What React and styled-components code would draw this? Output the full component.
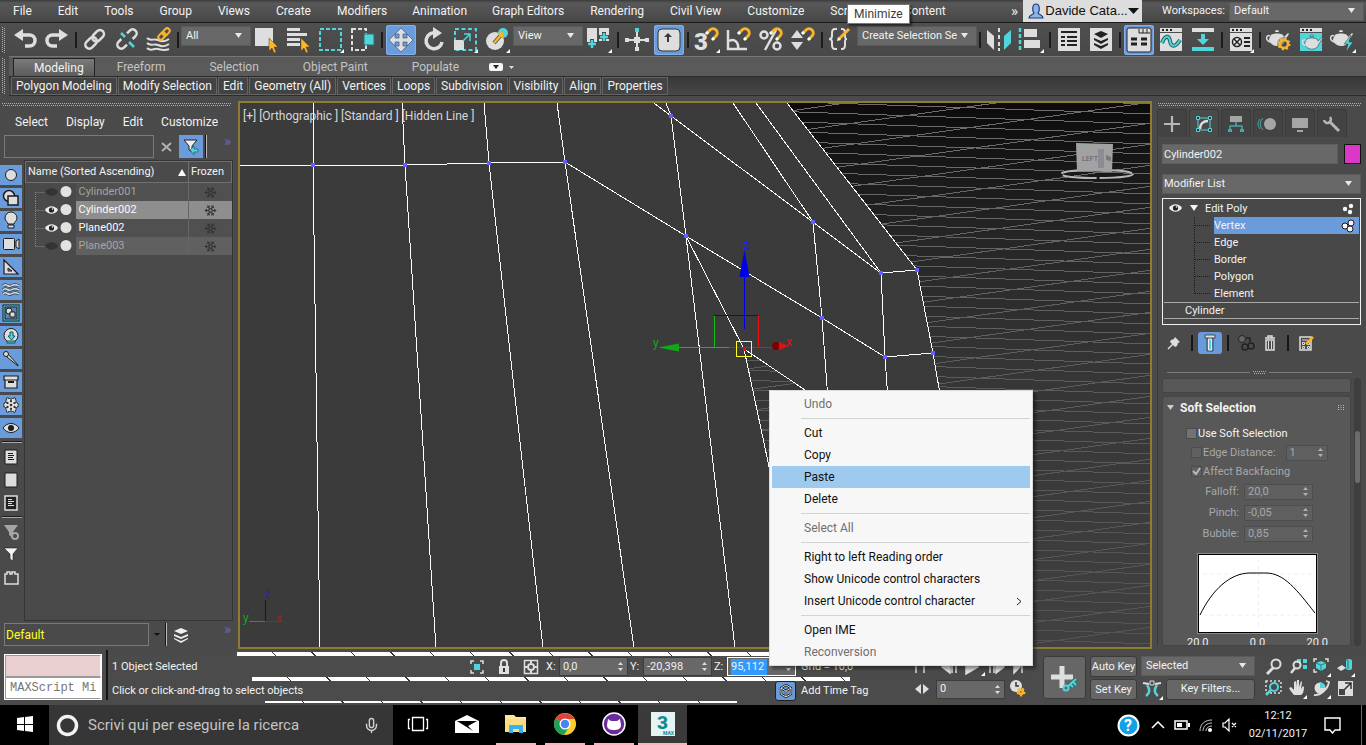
import React from "react";
import styled, { createGlobalStyle, css } from "styled-components";
import { Snowflake, Mic } from "lucide-react";

const c = {
  panel: "#4a4a4a",
  light: "#dedede",
  blue: "#6a9cdb",
  cyan: "#4fd5da",
  orange: "#f8b62c",
  gold: "#8f7b35",
  field: "#686868",
};

const Global = createGlobalStyle`
  * { box-sizing: border-box; }
  html, body { margin: 0; background: ${c.panel}; }
  body, button, input, select {
    font-family: Roboto, "Open Sans", "Noto Sans", sans-serif;
    font-size: 11px;
    line-height: 16px;
    color: #f2f2f2;
  }
  button, input, select { margin: 0; padding: 0; border: 0; background: none; outline: 0; }
  svg { display: block; flex: none; }
`;

const Page = styled.div`
  height: 100vh;
  min-height: 700px;
  display: flex;
  flex-direction: column;
  overflow: hidden;
  background: ${c.panel};
  white-space: nowrap;
`;

/* ---------- shared parts ---------- */

const Glyph = ({ s = 28, w = s, h = s, children, ...rest }) => (
  <svg width={w} height={h} viewBox={`0 0 ${w} ${h}`} fill="none" aria-hidden="true" {...rest}>
    {children}
  </svg>
);

const SelectWrap = styled.span`
  display: grid;
  grid-template-columns: minmax(0, 1fr) 16px;
  align-items: center;
  flex: none;
  width: ${(p) => p.$w || "auto"};
  height: ${(p) => p.$h || 20}px;
  margin: ${(p) => p.$m || "0"};
  background: ${c.field};
  border: 1px solid #5a5a5a;
  > select {
    grid-area: 1 / 1 / 2 / 3;
    appearance: none;
    width: 100%;
    height: 100%;
    padding-left: ${(p) => p.$pad || 4}px;
    padding-right: 14px;
  }
  > svg { grid-area: 1 / 2; pointer-events: none; }
`;

const Caret = () => (
  <Glyph w={10} h={6}><path d="M1 0h7L4.500 5z" fill="#e8e8e8" /></Glyph>
);

const Drop = ({ label, text, ...rest }) => (
  <SelectWrap {...rest}>
    <select aria-label={label} defaultValue={text}><option>{text}</option></select>
    <Caret />
  </SelectWrap>
);

const SpinBox = styled.span`
  display: flex;
  align-items: center;
  width: ${(p) => p.$w || 69}px;
  height: ${(p) => p.$h || 19}px;
  padding: 0 3px;
  background: ${(p) => (p.$dim ? "#5f5f5f" : c.field)};
  border: 1px solid ${(p) => (p.$focus ? "#ffffff" : p.$dim ? "#4d4d4d" : "#3c3c3c")};
  > input {
    flex: 1;
    min-width: 0;
    width: 20px;
    color: ${(p) => (p.$dim ? "#a8a8a8" : "#f0f0f0")};
    ${(p) => p.$focus && css`flex: none; width: 36px; background: #3399ff;`}
  }
  > svg { margin-left: auto; }
`;

const Arrows = ({ color }) => (
  <Glyph w={7} h={11}><path d="M1 4L3.500 1L6 4zM1 7h5L3.500 10z" fill={color} /></Glyph>
);

const Spin = ({ value, label, id, dim, focus, w, h }) => (
  <SpinBox $w={w} $h={h} $dim={dim} $focus={focus}>
    <input id={id} aria-label={label} defaultValue={value} />
    <Arrows color={dim ? "#b0b0b0" : "#dcdcdc"} />
  </SpinBox>
);

const DotLine = styled.div`
  height: 3px;
  margin: ${(p) => p.$m || "0"};
  background-image: repeating-linear-gradient(90deg, #b0b0b0 0 1px, transparent 1px 2px),
    repeating-linear-gradient(90deg, transparent 0 1px, #b0b0b0 1px 2px);
  background-size: 100% 1px;
  background-repeat: no-repeat;
  background-position: 0 0, 0 2px;
`;

const Grip = styled.div`
  align-self: stretch;
  flex: none;
  width: 4px;
  margin: ${(p) => p.$m};
  background-image: repeating-linear-gradient(180deg, #b0b0b0 0 1px, transparent 1px 2px),
    repeating-linear-gradient(180deg, transparent 0 1px, #b0b0b0 1px 2px);
  background-size: 1px 100%;
  background-position: 0 0, 2px 0;
  background-repeat: no-repeat;
`;

const Chevrons = styled.span`
  align-self: center;
  font-size: 15px;
  line-height: 16px;
  color: ${(p) => p.$color || "#6767b8"};
`;

const VLine = styled.i`
  flex: none;
  width: 2px;
  height: ${(p) => p.$h || 16}px;
  background: #161616;
  border-right: ${(p) => (p.$lit ? "1px solid #b8b8b8" : "0")};
`;

/* ---------- menu bar ---------- */

const MenuBar = styled.header`
  position: relative;
  display: flex;
  flex: none;
  height: 23px;
  background: linear-gradient(#3c3c3c, #585858 3px, #474747);
  border-bottom: 1px solid #1c1c1c;
`;
const Menus = styled.nav`
  display: flex;
  align-items: center;
  flex: 1;
  min-width: 0;
  overflow: hidden;
`;
const MenuItem = styled.button`
  flex: none;
  padding: 0 13px;
  height: 22px;
  font-size: 12px;
  ${(p) => p.$tight && css`padding: 0 12px;`}
`;
const User = styled.button`
  display: flex;
  align-items: center;
  justify-content: space-between;
  width: 119px;
  height: 22px;
  margin: 0 20px 0 5px;
  padding: 0 3px 0 4px;
  background: #dddddd;
  color: #111;
  font-family: "Liberation Sans", sans-serif;
  font-size: 13px;
`;
const Workspaces = styled.label`
  display: flex;
  align-items: center;
  gap: 4px;
  padding-right: 2px;
`;
const Tip = styled.div`
  position: absolute;
  left: 847px;
  top: 4px;
  height: 20px;
  padding: 1px 6px;
  background: #fff;
  border: 1px solid #777;
  box-shadow: 2px 2px 2px rgba(0, 0, 0, 0.5);
  color: #3c3c3c;
  font-size: 12px;
  z-index: 2;
`;

/* ---------- toolbar ---------- */

const Toolbar = styled.div`
  display: flex;
  flex: none;
  align-items: center;
  height: 33px;
  background: linear-gradient(#4f4f4f, #484848);
`;
const Tool = styled.button`
  display: grid;
  place-items: center;
  width: 30px;
  height: 30px;
  margin: 0 1px;
  flex: none;
  border-radius: 3px;
  ${(p) => p.$on && css`background: ${c.blue}; box-shadow: inset 0 0 0 1px #83b0e8;`}
`;
const ToolSep = styled.i`
  flex: none;
  width: 2px;
  height: 16px;
  margin: 0 2px;
  background: #1b1b1b;
`;

const L = c.light;
const Corner = () => <path d="M27 23v4h-4z" fill="#fff" />;
const Magnet = () => (
  <g>
    <path d="M14 7l3-3a4 4 0 0 1 6 6l-3 3" stroke={c.orange} strokeWidth="3" />
    <path d="M13 8l2-2M19 14l2-2" stroke="#fff" strokeWidth="3" />
  </g>
);
const Teapot = ({ y = 0, fill = L }) => (
  <g transform={`translate(0 ${y})`} fill={fill}>
    <path d="M6 7c2-2 10-2 12 0l1 2 4-4 1 1-4 6c-1 4-4 6-8 6s-8-3-8-7z" />
    <path d="M10 4a2 2 0 0 1 4 0z" />
    <path d="M5 8c-4-2-5 4 0 6" fill="none" stroke={fill} strokeWidth="1.500" />
  </g>
);
const Gear = ({ cx, cy, r = 4 }) => (
  <g>
    <circle cx={cx} cy={cy} r={r} stroke={c.orange} strokeWidth="2.500" />
    <circle cx={cx} cy={cy} r={r + 1.5} stroke={c.orange} strokeWidth="2" strokeDasharray="2 2.300" />
  </g>
);
const Cursor = () => <path d="M16 12v13l3-3 2 5 2-1-2-5h4z" fill={c.orange} stroke="#5a4510" strokeWidth="0.500" />;

const icons = {
  undo: <><path d="M10 9h8.500a5.500 5.500 0 0 1 0 11H14" stroke={L} strokeWidth="3.500" /><path d="M3 9l9-6v12z" fill={L} /></>,
  redo: <><path d="M18 9H9.500a5.500 5.500 0 0 0 0 11H14" stroke={L} strokeWidth="3.500" /><path d="M25 9l-9-6v12z" fill={L} /></>,
  link: <g transform="rotate(-45 14 13)" stroke={L} strokeWidth="2.500"><rect x="2" y="9" width="13" height="8" rx="4" /><rect x="12" y="9" width="13" height="8" rx="4" /></g>,
  unlink: <><g transform="rotate(-45 14 13)" stroke={L} strokeWidth="2.500"><path d="M10 9H6a4 4 0 0 0 0 8h4M18 9h4a4 4 0 0 1 0 8h-4" /></g><path d="M8 7l4 4M16 16l5 5" stroke={c.cyan} strokeWidth="2.500" /></>,
  bind: <><path d="M2 12c4 4 7 0 11 2s7 2 11-1M2 17c4 4 7 0 11 2s7 2 11-1M2 22c4 4 7 0 11 1s7 2 11 0" stroke={L} strokeWidth="2" /><g transform="rotate(-45 19 8)" stroke={c.orange} strokeWidth="2"><rect x="12" y="5.500" width="8" height="5" rx="2.500" /><rect x="18" y="5.500" width="8" height="5" rx="2.500" /></g></>,
  pick: <><path d="M2 2h18v18H2z" fill={L} /><Cursor /></>,
  byName: <><path d="M2 2h13v3H2zM2 7h20v3H2zM2 12h13v3H2zM2 17h13v3H2z" fill={L} /><Cursor /></>,
  region: <><rect x="3" y="3" width="21" height="21" stroke={c.cyan} strokeWidth="2" strokeDasharray="4 2" /><Corner /></>,
  window: <><rect x="3" y="3" width="14" height="21" stroke={L} strokeWidth="2" strokeDasharray="4 2" /><path d="M15 8h10v11H15z" fill={c.cyan} stroke="#2c6d70" /></>,
  move: <path d="M14 2l6 6h-4v4h4V8l6 6-6 6v-4h-4v4h4l-6 6-6-6h4v-4H8v4l-6-6 6-6v4h4V8H8z" fill={L} stroke="#4a5f7d" strokeWidth="0.800" />,
  rotate: <><path d="M17 7a8 8 0 1 0 6 9" stroke={L} strokeWidth="3.500" /><path d="M14 1l9 6-9 6z" fill={L} /></>,
  scale: <><rect x="4" y="3" width="21" height="21" stroke={c.cyan} strokeWidth="2" strokeDasharray="4 2.500" /><path d="M3 14h10v10H3z" fill={L} /><path d="M13 8h6v7M19 8l-7 7" stroke={c.cyan} strokeWidth="1.500" /><Corner /></>,
  place: <><circle cx="12" cy="15" r="9" fill={L} /><circle cx="20" cy="7" r="5" fill={c.cyan} /><path d="M11 17l7-8" stroke="#4a4a4a" strokeWidth="4" /><path d="M11 17l7-8" stroke={c.orange} strokeWidth="2.500" /><path d="M20 6v7l-6-6z" fill={c.orange} /><Corner /></>,
  pivot: <><path d="M2 2h10v18H2zM14 2h10v13H14z" fill={L} /><path d="M7 13v10M2 18h10M19 6v10M14 11h10" stroke="#3c4a4a" strokeWidth="4" /><path d="M7 14v8M3 18h8M19 7v8M15 11h8" stroke={c.cyan} strokeWidth="2.500" /><Corner /></>,
  manip: <><path d="M14 5v19M3 14h22" stroke={L} strokeWidth="2" /><path d="M12 2h4v4h-4z" fill={c.cyan} /><path d="M2 12h4v4H2zM22 12h4v4h-4zM12 21h4v4h-4zM11 11h6v6h-6z" fill={L} /></>,
  keys: <><rect x="3" y="3" width="22" height="22" rx="4" fill={L} stroke="#333" /><path d="M12 16v-5H9l4-4 4 4h-3v5z" fill="#3a3a3a" /></>,
  snap3: <><text x="1" y="24" fontSize="24" fontWeight="900" fill={L} fontFamily="Roboto">3</text><Magnet /><Corner /></>,
  angle: <><path d="M3 4v19h19" stroke={L} strokeWidth="2.500" /><path d="M4 15c6-3 10 2 9 8" stroke={L} strokeWidth="2.500" /><Magnet /></>,
  percent: <><circle cx="7" cy="9" r="3.500" stroke={L} strokeWidth="2.500" /><circle cx="20" cy="20" r="3.500" stroke={L} strokeWidth="2.500" /><path d="M19 4L8 24" stroke={L} strokeWidth="2.500" /><Magnet /></>,
  spinner: <><path d="M8 4l6 8H2zM8 24l6-8H2z" fill={L} /><Magnet /></>,
  named: <><path d="M10 3H8c-2 0-3 1-3 4v3c0 2-1 3-3 3 2 0 3 1 3 3v3c0 3 1 4 3 4h2M14 3h1c2 0 3 1 3 4v3c0 2 0 3 2 3-2 0-2 1-2 3v3c0 3-1 4-3 4h-1" stroke={L} strokeWidth="2" /><path d="M12 13L22 3" stroke={c.orange} strokeWidth="3" /><path d="M10 15l1-4 3 3z" fill="#fff" /></>,
  mirror: <><path d="M2 4l7 6v14l-7-7zM13 2h2v4h-2zM13 9h2v4h-2zM13 16h2v4h-2zM13 22h2v3h-2z" fill={L} /><path d="M26 4l-7 6v14l7-7z" fill={c.cyan} /></>,
  align: <><path d="M3 2v23" stroke={c.cyan} strokeWidth="2.500" strokeDasharray="4 2" /><path d="M7 3h13v8H7zM7 14h16v8H7z" fill={L} /><Corner /></>,
  explorer: <><path d="M3 2h22v23H3z" fill={L} /><path d="M6 6h16M6 11h4M6 15h4M6 19h4M12 11h10M12 15h10M12 19h10" stroke="#222" strokeWidth="2" /></>,
  layers: <><path d="M3 2h22v23H3z" fill={L} /><path d="M14 5l7 3-7 4-7-4zM7 12l7 3 7-3v2l-7 4-7-4zM7 17l7 3 7-3v2l-7 4-7-4z" fill="#222" /></>,
  ribbon: <><rect x="2" y="2" width="24" height="24" rx="2" fill={L} stroke="#222" /><path d="M14 3v4h11M18 3v4M22 3v4" stroke="#222" /><path d="M6 13h6M6 18h6M16 13h6M16 18h6" stroke="#222" strokeWidth="3" /><path d="M6 15.500h16" stroke={L} /></>,
  curve: <><path d="M3 2h22v4H3zM3 7h22v18H3z" fill={L} /><path d="M5 4h2M9 4h2M13 4h2" stroke="#222" strokeWidth="2" /><path d="M5 17c3-8 7-8 8-2s5 7 10-1" stroke="#1d5f66" strokeWidth="4" /><path d="M5 17c3-8 7-8 8-2s5 7 10-1" stroke={c.cyan} strokeWidth="2" /></>,
  schematic: <><path d="M3 2h22v4H3z" fill={L} /><path d="M3 21h22v4H3z" fill={c.cyan} /><path d="M12 8h4v5h4l-6 6-6-6h4z" fill={c.cyan} /></>,
  material: <><path d="M3 2h22v4H3zM3 7h22v18H3z" fill={L} /><path d="M5 4h2M9 4h2M13 4h2" stroke="#222" strokeWidth="2" /><circle cx="10" cy="16" r="4.500" fill="#eee" stroke="#222" strokeWidth="1.500" /><path d="M7 13l6 6M13 13l-6 6" stroke="#222" strokeWidth="1.500" /><path d="M17 12h6M17 16h6M17 20h6" stroke="#222" strokeWidth="2" /><Corner /></>,
  renderSet: <><Teapot y={2} /><circle cx="19" cy="18" r="7" fill="#4a4a4a" opacity="0.500" /><Gear cx={19} cy={18} /></>,
  renderFrame: <><path d="M3 2h22v4H3z" fill={L} /><path d="M3 7h22v18H3z" fill={c.cyan} /><path d="M5 4h2M9 4h2M13 4h2" stroke="#222" strokeWidth="2" /><g transform="translate(4 7) scale(.9)" stroke="#2b5f61" strokeWidth="0.800"><Teapot /></g></>,
  render: <><Teapot y={2} /><path d="M22 9l-7 9h4l-2 8 7-10h-4z" fill={c.cyan} stroke="#3a3a3a" strokeWidth="0.500" /><Corner /></>,
};

const tool = (name, label, on) => ({ name, label, on });
const toolGroups = [
  [tool("undo", "Undo"), tool("redo", "Redo")],
  [tool("link", "Link"), tool("unlink", "Unlink"), tool("bind", "Bind to Space Warp")],
  ["All", tool("pick", "Select Object"), tool("byName", "Select by Name"), tool("region", "Selection Region"), tool("window", "Window Crossing")],
  [tool("move", "Move", true), tool("rotate", "Rotate"), tool("scale", "Scale"), tool("place", "Place"), "View", tool("pivot", "Pivot Center")],
  [tool("manip", "Manipulate"), tool("keys", "Keyboard Override", true)],
  [tool("snap3", "Snaps"), tool("angle", "Angle Snap"), tool("percent", "Percent Snap"), tool("spinner", "Spinner Snap")],
  [tool("named", "Named Sets"), "Create Selection Se"],
  [tool("mirror", "Mirror"), tool("align", "Align")],
  [tool("explorer", "Scene Explorer"), tool("layers", "Layer Explorer")],
  [tool("ribbon", "Toggle Ribbon", true), tool("curve", "Curve Editor"), tool("schematic", "Schematic View")],
  [tool("material", "Material Editor")],
  [tool("renderSet", "Render Setup"), tool("renderFrame", "Rendered Frame"), tool("render", "Render")],
];

/* ---------- ribbon ---------- */

const RibbonRow = styled.div`
  display: flex;
  flex: none;
  height: 45px;
`;
const Ribbon = styled.div`
  flex: 1;
  min-width: 0;
  margin-bottom: 5px;
  border-top: 1px solid #767676;
`;
const Tabs = styled.div`
  display: flex;
  align-items: flex-end;
  height: 20px;
  padding-left: 4px;
  background: #5a5a5a;
  border-bottom: 1px solid #2c2c2c;
`;
const Tab = styled.button`
  height: 18px;
  padding: 0 22px;
  font-size: 12px;
  color: #c4c4c4;
  ${(p) => p.$on && css`
    padding: 0 10px 0 20px;
    color: #f4f4f4;
    background: linear-gradient(#7a7a7a, #5c5c5c);
    border: 1px solid #222;
    border-bottom: 0;
  `}
`;
const TabTools = styled.div`
  display: flex;
  align-items: center;
  gap: 5px;
  height: 18px;
  padding-left: 8px;
`;
const Panels = styled.div`
  display: flex;
  gap: 1px;
  height: 19px;
  padding-left: 2px;
  background: linear-gradient(#383838, #484848);
  border-bottom: 1px solid #2c2c2c;
`;
const PanelButton = styled.button`
  height: 18px;
  padding: 0 4px;
  font-size: 12px;
  border: 1px solid #646464;
  background: #434343;
`;

/* ---------- left explorer ---------- */

const Main = styled.main`
  display: flex;
  flex: 1;
  min-height: 0;
`;
const Left = styled.aside`
  display: flex;
  flex-direction: column;
  flex: none;
  width: 238px;
  padding: 2px 1px 2px 0;
`;
const SideMenus = styled.nav`
  display: flex;
  padding: 6px 0 1px 7px;
  > button { height: 20px; padding: 0 9px 0 8px; font-size: 12px; }
  > button + button { padding: 0 9px; }
`;
const SearchRow = styled.div`
  display: flex;
  align-items: center;
  height: 27px;
  padding: 0 6px 0 4px;
  > input {
    width: 150px;
    height: 23px;
    border: 1px solid #7a7a7a;
    padding: 0 4px;
    ${(p) => p.$layer && css`color: #ffff20; width: 145px; padding: 0 1px; font-size: 12px;`}
  }
  > :last-child { margin-left: auto; align-self: flex-start; }
`;
const ClearButton = styled.button`
  display: grid;
  place-items: center;
  width: ${(p) => p.$w || 25}px;
`;
const FilterButton = styled.button`
  display: grid;
  place-items: center;
  width: 24px;
  height: 23px;
  margin-right: 2px;
  background: ${c.blue};
`;
const Explorer = styled.div`
  display: flex;
  flex: 1;
  min-height: 0;
  margin: 0 4px 0 0;
`;
const Strip = styled.div`
  display: flex;
  flex-direction: column;
  gap: 3px;
  width: 24px;
  padding-top: 5px;
`;
const StripButton = styled.button`
  display: grid;
  place-items: center;
  width: 22px;
  height: 20px;
  flex: none;
  ${(p) => p.$on && css`background: ${c.blue};`}
`;
const StripRule = styled.i`
  height: 2px;
  margin: 0 2px 1px;
  border-top: 1px solid #1d1d1d;
  border-bottom: 1px solid #a8a8a8;
  flex: none;
`;
const TreeBox = styled.div`
  flex: 1;
  border: 1px solid #353535;
`;
const Tree = styled.table`
  width: 100%;
  border-collapse: collapse;
  table-layout: fixed;
  th {
    height: 21px;
    padding: 0 2px;
    text-align: left;
    font-weight: 400;
    border: 1px solid #707070;
  }
  th > span { display: flex; align-items: center; justify-content: space-between; }
  td { height: 18px; padding: 0; }
`;
const NameCell = styled.td`
  && { padding-left: 3px; }
  color: ${(p) => (p.$hidden ? "#a4a4a4" : "#fafafa")};
  background: ${(p) => p.$bg};
  border-right: 1px solid #666;
`;
const FrozenCell = styled.td`
  background: ${(p) => p.$bg};
  > svg { margin: 0 auto; }
`;

const INK = "#1c1c1c";
const WAVES = "M3 6c3-4 5 2 8 0s5-2 8 0M3 10c3-4 5 2 8 0s5-2 8 0M3 14c3-4 5 2 8 0s5-2 8 0";
const stripIcons = [
  ["Geometry", true, <circle cx="11" cy="10" r="5.500" fill={L} stroke={INK} />],
  ["Shapes", true, <><circle cx="9" cy="8" r="5.500" fill={L} stroke={INK} strokeWidth="1.500" /><path d="M8 8h10v9H8z" fill={L} stroke={INK} strokeWidth="1.500" /></>],
  ["Lights", true, <><path d="M8 13c0-2-3-3-3-6a6 6 0 0 1 12 0c0 3-3 4-3 6z" fill={L} stroke={INK} /><path d="M8 14h6v3H8z" fill={L} stroke={INK} /></>],
  ["Cameras", true, <><rect x="3.500" y="4.500" width="11" height="11" rx="1" fill={L} stroke={INK} /><path d="M16 7l3-2v10l-3-2z" fill={L} stroke={INK} /></>],
  ["Helpers", true, <><path d="M4 3v14h14z" fill={L} stroke={INK} strokeWidth="1.200" /><path d="M8 11v3h4z" fill={c.blue} stroke={INK} /></>],
  ["Space Warps", true, <><path d={WAVES} stroke="#2b3a4d" strokeWidth="3" /><path d={WAVES} stroke={L} strokeWidth="1.500" /></>],
  ["Groups", true, <><rect x="4" y="3" width="14" height="14" fill="#5a85ba" stroke={INK} strokeWidth="3" /><rect x="4" y="3" width="14" height="14" stroke={c.cyan} /><circle cx="9" cy="8" r="3" fill={L} stroke={INK} /><path d="M10 9h5v5h-5z" fill={L} stroke={INK} /></>],
  ["XRefs", true, <><circle cx="11" cy="9.500" r="7" fill={L} stroke={INK} /><path d="M10 6h3v4h2l-3.500 4L8 10h2z" fill={c.cyan} stroke="#14575a" /><path d="M7 15h8v2H7z" fill={c.cyan} stroke="#14575a" /></>],
  ["Bones", true, <><path d="M8 5l10 11v1L7 8z" fill={L} stroke={INK} /><circle cx="6" cy="5" r="2.500" fill={L} stroke={INK} /></>],
  ["Containers", true, <><path d="M4 4h14v4H4zM5 8h12v8H5z" fill={L} stroke={INK} strokeWidth="1.200" /><path d="M8 10h6" stroke={INK} strokeWidth="2" /></>],
  ["Frozen", true, <><Snowflake x="3" y="2" width="16" height="16" color="#333" strokeWidth="5" /><Snowflake x="3" y="2" width="16" height="16" color="#e8e8e8" strokeWidth="2.500" /></>],
  ["Hidden", true, <><path d="M3 10c4-6 12-6 16 0-4 6-12 6-16 0z" fill={L} stroke={INK} /><circle cx="11" cy="10" r="3" fill={INK} /></>],
  null,
  ["All", false, <><path d="M5 3h12v14H5z" fill={L} stroke={INK} /><path d="M8 6.500h5M8 8.500h6M8 10.500h5M8 12.500h6" stroke={INK} /></>],
  ["None", false, <path d="M5 3h12v14H5z" fill={L} stroke={INK} />],
  ["Invert", false, <><path d="M5 3h12v14H5z" fill="#222" stroke={L} strokeWidth="1.500" /><path d="M8 6.500h4M8 8.500h6M8 10.500h4M8 12.500h6" stroke={L} /></>],
  null,
  ["Filter Settings", false, <><path d="M4 3h14l-5 7v6l-4-3v-3z" fill="#a5a5a5" /><circle cx="15" cy="14" r="3" fill="#4a4a4a" stroke="#a5a5a5" strokeWidth="2" /></>],
  ["Filter", false, <path d="M4 3h14l-5 6v7l-3-2V9z" fill="#f4f4f4" stroke={INK} strokeWidth="0.600" />],
  ["Extensions", false, <path d="M5 6h2V4h3v2h2V4h3v2h3v10H5z" stroke={L} strokeWidth="1.500" />],
];

const Eye = ({ x = 0, y = 0, off }) => (
  <g transform={`translate(${x} ${y})`}>
    <path d="M0 5c3-5 10-5 13 0-3 5-10 5-13 0z" fill={off ? "#343434" : "#ececec"} />
    {!off && <circle cx="6.500" cy="5" r="2.600" fill="#222" />}
    {!off && <circle cx="7.500" cy="4" r="0.800" fill="#fff" />}
  </g>
);

const rows = [
  { name: "Cylinder001", hidden: true, bg: "#505050", first: true },
  { name: "Cylinder002", bg: "#8e8e8e" },
  { name: "Plane002", bg: "#505050" },
  { name: "Plane003", hidden: true, bg: "#606060", last: true },
];

/* ---------- viewport ---------- */

const Viewport = styled.section`
  position: relative;
  display: flex;
  flex: 1;
  min-width: 0;
  margin-bottom: 1px;
  border: 2px solid ${c.gold};
  > svg { flex: 1; width: 100%; height: 100%; min-width: 0; }
`;
const ViewLabel = styled.div`
  position: absolute;
  left: 3px;
  top: 5px;
  color: #d8d8d8;
  font-size: 12px;
`;

const falling = Array.from({ length: 62 }, (_, i) => `M740 ${60 + i * 10}L1152 ${74 + i * 10}`).join("");
const rising = Array.from({ length: 32 }, (_, i) => `M740 ${118 + i * 21}L1152 ${60 + i * 21}`).join("");

const meshPath =
  "M239 165H313L405 165L489 163L565 162L686 236L822 318L885 357L933 353" +
  "M313 103V165L320 648M402 103L405 165L436 648M484 103L489 163L543 648M557 103L565 162L634 648" +
  "M654 103L671 116L813 222L881 273L917 270M666 103L671 116L686 236L735 648" +
  "M733 103L813 222L822 318L828 400M756 103L881 273L885 357L888 400M787 103L917 270L933 353L941 400" +
  "M686 236L744 349L774 490M744 349L820 400";
const points = [[313, 165], [405, 165], [489, 163], [565, 162], [686, 236], [671, 116], [813, 222], [881, 273], [917, 270], [822, 318], [885, 357], [933, 353]];

const Scene = () => (
  <svg viewBox="240 103 910 544" preserveAspectRatio="xMidYMid slice" fill="none" role="img" aria-label="Orthographic view">
    <defs>
      <linearGradient id="depth" x1="0" y1="0" x2="0" y2="1">
        <stop offset="0" stopColor="#0b0b0b" />
        <stop offset="0.250" stopColor="#262626" />
        <stop offset="0.500" stopColor="#363636" />
        <stop offset="1" stopColor="#414141" />
      </linearGradient>
      <linearGradient id="lines" x1="0" y1="103" x2="0" y2="648" gradientUnits="userSpaceOnUse">
        <stop offset="0" stopColor="#6e6e6e" />
        <stop offset="0.500" stopColor="#5c5c5c" />
        <stop offset="1" stopColor="#545454" />
      </linearGradient>
      <clipPath id="open"><path d="M787 103L917 270L933 353L990 648H1152V103zM744 349L820 400L790 560z" /></clipPath>
    </defs>
    <path d="M239 103h913v546H239z" fill="#3b3b3b" />
    <g clipPath="url(#open)" shapeRendering="crispEdges">
      <path d="M740 103h412v546H740z" fill="url(#depth)" />
      <path d={falling + rising} stroke="url(#lines)" />
    </g>
    <path d={meshPath} stroke="#fff" shapeRendering="crispEdges" />
    {points.map(([x, y]) => <rect key={`${x}-${y}`} x={x - 2} y={y - 2} width="4" height="4" fill="#6060ff" />)}
    <path d="M744 277h1v52h-1zM714 315h44v1h-44z" fill="#0000e6" />
    <path d="M714 316h1v32h-1zM678 347h51v1h-51z" fill="#10c010" />
    <path d="M758 316h1v32h-1zM729 347h46v1h-46z" fill="#e81010" />
    <path d="M744.500 250l5 27h-10z" fill="#0000e6" />
    <path d="M658 347.500l21-4v8z" fill="#10a818" />
    <circle cx="776" cy="346" r="4" fill="#7c0000" />
    <path d="M779 342l10 4-10 4z" fill="#e01010" />
    <rect x="736.500" y="341.500" width="15" height="15" stroke="#ffff20" />
    <path d="M743 347h3v4h-3z" fill="#e01010" />
    <g fontSize="12" fontFamily="Roboto">
      <text x="743" y="249" fill="#2020e0">z</text>
      <text x="653" y="347" fill="#10a818">y</text>
      <text x="786" y="346" fill="#e01010">x</text>
      <text x="264" y="598" fill="#2020e0">z</text>
      <text x="243" y="622" fill="#10a818">y</text>
      <text x="276" y="622" fill="#a02020">x</text>
    </g>
    <path d="M265 600h1v21h-1z" fill="#0000e6" />
    <path d="M249 621h16v1h-16z" fill="#10a818" />
    <path d="M265 621h16v1h-16z" fill="#a02020" />
    <ellipse cx="1097" cy="174" rx="36" ry="4" stroke="#b4b7bb" strokeWidth="2" strokeDasharray="34 3" />
    <path d="M1076 143l37 1-1 28-35-1z" fill="#a2a2a2" />
    <path d="M1098 149h6v19h-6z" fill="#8b8d93" />
    <path d="M1106 155l5 2v4l-5-1z" fill="#777a80" />
    <text x="1082" y="161" fontSize="7" fill="#5a5d63" fontFamily="Roboto">LEFT</text>
  </svg>
);

/* ---------- command panel ---------- */

const Right = styled.aside`
  display: flex;
  flex-direction: column;
  flex: none;
  width: 214px;
  min-height: 0;
  padding: 2px 5px 4px 5px;
`;
const CommandTabs = styled.div`
  display: flex;
  gap: 2px;
  margin-top: 3px;
  > button {
    display: grid;
    place-items: center;
    width: 30px;
    height: 28px;
    background: #434343;
    border: 1px solid #3a3a3a;
    border-bottom: 0;
    border-radius: 3px 3px 0 0;
  }
  > button:nth-child(2) { background: ${c.panel}; }
`;
const Body = styled.div`
  display: flex;
  flex-direction: column;
  flex: 1;
  min-height: 0;
  padding: 7px 0 0 4px;
  border-left: 1px solid #3a3a3a;
`;
const NameRow = styled.div`
  display: flex;
  gap: 6px;
  margin-bottom: 10px;
  > input {
    flex: 1;
    min-width: 0;
    height: 20px;
    padding: 0 1px;
    background: ${c.field};
    border: 1px solid #5e5e5e;
  }
  > button { width: 17px; height: 20px; background: #dc38c8; border: 1px solid #111; }
`;
const Stack = styled.ul`
  display: flex;
  flex-direction: column;
  flex: none;
  height: 127px;
  margin: 4px 0 6px;
  padding: 1px;
  list-style: none;
  border: 1px solid #f0f0f0;
  background: #484848;
`;
const StackRow = styled.li`
  display: flex;
  align-items: center;
  height: 17px;
  flex: none;
  > b { flex: 1; font-weight: 400; display: flex; align-items: center; height: 17px; }
  ${(p) => p.$on && css`> b { background: ${c.blue}; }`}
  ${(p) => p.$base && css`
    padding-left: 21px;
    border-top: 1px solid #a8a8a8;
    border-bottom: 1px solid #a8a8a8;
  `}
`;
const DotsCell = styled.span`
  display: flex;
  align-items: center;
  height: 17px;
  padding-right: 3px;
  background: ${(p) => (p.$on ? c.blue : "none")};
`;
const StackTools = styled.div`
  display: flex;
  flex: none;
  align-items: center;
  height: 24px;
  > button { display: grid; place-items: center; width: 24px; height: 22px; border-radius: 3px; }
  > button[aria-pressed="true"] { background: ${c.blue}; }
  > i { margin: 0 5px; }
`;
const Splitter = styled.div`
  display: flex;
  flex: none;
  align-items: center;
  gap: 3px;
  height: 8px;
  margin: 13px 9px 2px 5px;
  &::before, &::after { content: ""; flex: 1; height: 1px; background: #7c7c7c; }
  > i { width: 13px; }
`;
const Rollouts = styled.div`
  display: flex;
  flex: 1;
  min-height: 0;
  gap: 3px;
  overflow: hidden;
`;
const RolloutList = styled.div`
  display: flex;
  flex-direction: column;
  gap: 3px;
  flex: 1;
  min-width: 0;
`;
const Rollout = styled.section`
  background: #585858;
  border: 1px solid #454545;
  border-radius: 2px;
  ${(p) => p.$tail ? css`height: 15px;` : css`flex: 1; min-height: 0; overflow: hidden;`}
`;
const RolloutHead = styled.h2`
  display: flex;
  align-items: center;
  gap: 5px;
  height: 22px;
  margin: 0 6px 5px 4px;
  font-size: 12px;
  > svg:last-child { margin-left: auto; }
`;
const CheckRow = styled.div`
  display: flex;
  align-items: center;
  gap: 10px;
  height: 19px;
  margin-left: ${(p) => (p.$sub ? 28 : 23)}px;
`;
const CheckLabel = styled.label`
  display: flex;
  align-items: center;
  gap: 1px;
  color: ${(p) => (p.$sub ? "#a8a8a8" : "#f5f5f5")};
`;
const Box = styled.span`
  display: grid;
  place-items: center;
  > * { grid-area: 1 / 1; }
  > input {
    appearance: none;
    width: 11px;
    height: 11px;
    background: ${(p) => (p.$sub ? "#606060" : "#727272")};
    border: 1px solid #4c4c4c;
  }
  > svg { visibility: hidden; pointer-events: none; }
  > input:checked + svg { visibility: visible; }
`;
const Check = ({ label, sub, checked, children }) => (
  <CheckRow $sub={sub}>
    <CheckLabel $sub={sub}>
      <Box $sub={sub}>
        <input type="checkbox" defaultChecked={checked} />
        <Glyph w={9} h={9}><path d="M1 4l3 3 4-6" stroke="#bdbdbd" strokeWidth="1.800" /></Glyph>
      </Box>
      {label}
    </CheckLabel>
    {children}
  </CheckRow>
);
const ParamRow = styled.div`
  display: grid;
  grid-template-columns: 76px 69px;
  gap: 5px;
  align-items: center;
  height: 21px;
  color: #a8a8a8;
  > label { text-align: right; }
`;
const Falloff = styled.div`
  width: 121px;
  margin: 9px 0 0 34px;
  border: 1px solid #8a8a8a;
`;
const Axis = styled.div`
  display: flex;
  justify-content: space-between;
  width: 141px;
  margin: 1px 0 0 24px;
`;
const Scroll = styled.div`
  width: 7px;
  border-radius: 3px;
  background: #3e3e3e;
  &::after {
    content: "";
    display: block;
    width: 5px;
    height: 52px;
    margin: 53px auto 0;
    border-radius: 3px;
    background: #6c6c6c;
  }
`;

const commandIcons = [
  ["Create", <path d="M11 3v16M3 11h16" stroke="#b8b8b8" strokeWidth="2.200" />],
  ["Modify", <><rect x="5" y="5" width="12" height="12" stroke="#4fd5da" /><path d="M7 16c0-5 3-8 8-8" stroke={L} strokeWidth="2.500" /><path d="M3.500 3.500h3v3h-3zM15.500 3.500h3v3h-3zM3.500 15.500h3v3h-3zM15.500 15.500h3v3h-3z" fill="#333" stroke="#4fd5da" /></>],
  ["Hierarchy", <><path d="M5 3h12v6H5z" fill="#a5a5a5" /><path d="M11 9v4M5 17v-4h12v4" stroke="#4aa5a9" strokeWidth="1.500" /><path d="M3 16h4v3H3zM15 16h4v3h-4z" fill="#4aa5a9" /></>],
  ["Motion", <><circle cx="13" cy="11" r="6" fill="#a5a5a5" /><path d="M6 5a8 8 0 0 0 0 12M3 6a8 8 0 0 0 0 10" stroke="#4aa5a9" /></>],
  ["Display", <path d="M3 5h16v10H3zM8 17h6v2H8z" fill="#a5a5a5" />],
  ["Utilities", <><path d="M8 8l10 10" stroke="#b5b5b5" strokeWidth="3" /><path d="M9 4a3.500 3.500 0 1 1-6 3" stroke="#b5b5b5" strokeWidth="2.500" /></>],
];

const Dots = ({ on }) => (
  <DotsCell $on={on}>
    <Glyph w={15} h={14}>
      <g fill="#f5f5f5" stroke={on ? "#1c1c1c" : "none"}>
        <circle cx="4" cy="7" r={on ? 3 : 2.2} /><circle cx="10" cy="4" r={on ? 3 : 2.2} /><circle cx="9" cy="10" r={on ? 3 : 2.2} />
      </g>
    </Glyph>
  </DotsCell>
);

/* ---------- status ---------- */

const Status = styled.footer`
  display: flex;
  flex: none;
  height: 55px;
  background: #4b4b4b;
`;
const Listener = styled.div`
  display: flex;
  flex-direction: column;
  width: 98px;
  height: 46px;
  margin: 4px 4px 0 4px;
  border: 1px solid #fff;
  > input {
    height: 22px;
    padding: 0 4px;
    border: 1px solid #999;
    border-right-color: #fff;
    background: #e9cfcf;
    color: #777;
    font-family: "Liberation Mono", monospace;
    font-size: 12px;
  }
  > input + input { background: #fff; }
`;
const StatusCenter = styled.div`
  display: flex;
  flex-direction: column;
  flex: 1;
  min-width: 0;
  padding: 2px 0;
`;
const StatusRow = styled.div`
  display: flex;
  align-items: center;
  height: ${(p) => p.$h}px;
  padding-left: 4px;
  > p { flex: 1; margin: 0; min-width: 0; }
  > label { width: 15px; padding-left: 2px; }
`;
const Readout = styled.span`
  width: 112px;
  padding-left: 5px;
`;
const StatusIcon = styled.button`
  display: grid;
  place-items: center;
  width: 27px;
  height: 20px;
`;
const TagButton = styled.button`
  display: grid;
  place-items: center;
  width: 21px;
  height: 20px;
  background: ${c.blue};
  border: 1px solid #222;
  border-radius: 3px;
`;
const Ghost = styled.div`
  height: ${(p) => p.$h}px;
  margin-left: ${(p) => p.$l}px;
  width: ${(p) => p.$w}px;
  background: repeating-linear-gradient(45deg, #fff 0 27px, #333 27px 28px);
`;
const Play = styled.div`
  display: grid;
  grid-template-rows: 22px 20px;
  align-content: center;
  gap: 1px;
  width: 130px;
  margin-right: 5px;
  > div { display: flex; align-items: center; gap: 2px; }
`;
const AddKey = styled.button`
  display: grid;
  place-items: center;
  width: 43px;
  height: 43px;
  margin: 6px 4px 0 0;
  background: #666;
  border: 1px solid #3b3b3b;
  border-radius: 3px;
`;
const KeyColumn = styled.div`
  display: flex;
  flex-direction: column;
  gap: 2px;
  width: ${(p) => p.$w}px;
  padding-top: 6px;
  margin-right: 4px;
  > div { display: flex; align-items: center; justify-content: space-between; }
`;
const KeyButton = styled.button`
  height: 21px;
  width: ${(p) => p.$w || "100%"};
  background: #666;
  border: 1px solid #3b3b3b;
  border-radius: 3px;
`;
const Nav = styled.div`
  display: grid;
  grid-template-columns: repeat(4, 24px);
  grid-auto-rows: 22px;
  padding: 5px 9px 0 2px;
  > button { display: grid; place-items: center; }
`;

const Mini = () => <path d="M20 17v4h-4z" fill="#fff" />;
const navIcons = [
  ["Zoom", <><circle cx="13" cy="8" r="4.500" stroke={L} strokeWidth="2" /><path d="M10 12l-6 6" stroke={L} strokeWidth="3" /></>],
  ["Zoom All", <><path d="M10 3h4v4h-4zM16 3h4v4h-4zM16 9h4v4h-4z" fill={c.cyan} /><circle cx="10" cy="9" r="3.500" stroke={L} strokeWidth="2" /><path d="M8 12l-4 5" stroke={L} strokeWidth="2.500" /></>],
  ["Zoom Extents", <><path d="M3 6V3h3M14 3h3v3M3 13v3h3" stroke={L} strokeWidth="1.500" /><path d="M10 5l5 2v5l-5 3-5-3V7z" fill={c.cyan} /><path d="M5 7l5 2 5-2M10 9v6" stroke="#2b6a6d" strokeWidth="0.800" /><Mini /></>],
  ["Zoom Extents All", <><path d="M11 5a3 2 0 0 1 6 0v7a3 2 0 0 1-6 0z" fill={c.cyan} /><path d="M13 4v9" stroke="#2b6a6d" /><path d="M2 12l5-3 4 3-5 3z" fill={L} /><Mini /></>],
  ["Zoom Region", <><path d="M3 3h15v12H3z" stroke={L} strokeWidth="1.500" strokeDasharray="2 2" /><circle cx="11" cy="9" r="4" stroke={c.cyan} strokeWidth="2" /><path d="M8 12l-5 5" stroke={c.cyan} strokeWidth="2.500" /></>],
  ["Pan", <><path d="M7 17c-2-2-4-5-5-7l2-1 3 3V4l2-1v6l1-7h2v7l2-6 1 1-1 7 2-3 1 1c0 4-1 7-3 8z" fill={L} /><Mini /></>],
  ["Orbit", <><circle cx="9" cy="10" r="5.500" fill={L} /><path d="M9 10V4a6 6 0 0 1 5 6z" fill={c.cyan} /><path d="M3 17C9 18 17 11 18 4l-3-1" stroke={L} strokeWidth="1.800" /><Mini /></>],
  ["Maximize", <><path d="M3 3h15v15H3z" fill={L} /><path d="M10 5h6v6M16 5l-7 7" stroke="#333" strokeWidth="1.500" /><path d="M4 11h6v6H4z" fill="#444" /></>],
];

/* ---------- task bar ---------- */

const Taskbar = styled.footer`
  display: flex;
  flex: none;
  height: 40px;
  background: #000;
`;
const TaskButton = styled.button`
  display: grid;
  place-items: center;
  width: 49px;
  flex: none;
  border-bottom: 2px solid transparent;
  ${(p) => p.$run && css`background: linear-gradient(#ffb3bb, #ffb3bb) 50% 100% / 40px 2px no-repeat border-box;`}
  ${(p) => p.$active && css`background: #3a3a3a; border-bottom-color: #ffb3bb;`}
`;
const TaskSearch = styled.label`
  display: flex;
  align-items: center;
  gap: 9px;
  width: 344px;
  padding: 0 13px 0 7px;
  background: #363636;
  > input { flex: 1; min-width: 0; font-size: 15px; line-height: 20px; color: #c4c4c4; }
  > input::placeholder { color: #c4c4c4; opacity: 1; }
`;
const Tray = styled.div`
  display: flex;
  align-items: center;
  margin-left: auto;
  > button { display: grid; place-items: center; width: 24px; height: 38px; flex: none; }
  > button:first-child { width: 36px; }
`;
const Clock = styled.time`
  width: 72px;
  text-align: center;
  line-height: 18px;
`;
const Notice = styled.button`
  && {
    width: 48px;
    height: 40px;
    margin-right: 4px;
    padding-right: 10px;
    border-right: 1px solid #6a6a6a;
  }
`;

/* ---------- context menu ---------- */

const Context = styled.div`
  position: absolute;
  left: 769px;
  top: 390px;
  width: 264px;
  padding: 3px;
  background: #f7f7f7;
  box-shadow: 0 0 0 1px #dadada inset, 3px 3px 3px rgba(0, 0, 0, 0.4);
  z-index: 3;
  > hr { height: 1px; margin: 3px 0 3px 29px; border: 0; background: #d2d2d2; }
`;
const ContextItem = styled.button`
  display: flex;
  align-items: center;
  justify-content: space-between;
  width: 100%;
  height: 22px;
  padding: 0 8px 0 32px;
  font-size: 12px;
  color: ${(p) => (p.$off ? "#6f6f6f" : "#111")};
  background: ${(p) => (p.$on ? "#9fcaef" : "transparent")};
`;

const contextItems = [
  ["Undo", "off"], null, ["Cut"], ["Copy"], ["Paste", "on"], ["Delete"], null, ["Select All", "off"], null,
  ["Right to left Reading order"], ["Show Unicode control characters"], ["Insert Unicode control character", "sub"], null,
  ["Open IME"], ["Reconversion", "off"],
];

const menuNames = ["File", "Edit", "Tools", "Group", "Views", "Create", "Modifiers", "Animation", "Graph Editors", "Rendering", "Civil View", "Customize", "Scripting", "Content"];
const tightMenus = ["Animation"];
const dropWidths = { All: "70px", View: "70px", "Create Selection Se": "120px" };

export default function App() {
  return (
    <Page>
      <Global />
      <MenuBar>
        <Menus>{menuNames.map((m) => <MenuItem key={m} $tight={tightMenus.includes(m)}>{m}</MenuItem>)}</Menus>
        <Chevrons $color="#e8e8e8">»</Chevrons>
        <User>
          <Glyph w={18} h={20}><path d="M2 17c0-3 4-3 5-5-2-2-2-9 2-9s4 7 2 9c1 2 5 2 5 5z" fill="#8db4ea" stroke="#1d3c78" strokeWidth="1.200" /></Glyph>
          Davide Cata...
          <Glyph w={11} h={7}><path d="M0 0h11L5.500 6z" fill="#111" /></Glyph>
        </User>
        <Workspaces>Workspaces: <Drop label="Workspaces" text="Default" $w="135px" $h={19} /></Workspaces>
        <Tip role="tooltip">Minimize</Tip>
      </MenuBar>

      <Toolbar>
        <Grip $m="4px 3px 3px 2px" />
        {toolGroups.map((group, i) => (
          <React.Fragment key={i}>
            {i > 0 && <ToolSep />}
            {group.map((t) =>
              typeof t === "string" ? (
                <Drop key={t} label={t} text={t} $w={dropWidths[t]} $m="0 0 7px" />
              ) : (
                <Tool key={t.name} aria-label={t.label} $on={t.on}><Glyph>{icons[t.name]}</Glyph></Tool>
              )
            )}
          </React.Fragment>
        ))}
      </Toolbar>

      <RibbonRow>
        <Grip $m="2px 3px 7px 2px" />
        <Ribbon>
          <Tabs>
            <Tab $on>Modeling</Tab>
            {["Freeform", "Selection", "Object Paint", "Populate"].map((t) => <Tab key={t}>{t}</Tab>)}
            <TabTools>
              <Glyph w={14} h={8}><rect width="14" height="8" rx="2" fill="#f5f5f5" /><path d="M4 2h6L7 6z" fill="#222" /></Glyph>
              <Glyph w={7} h={5}><path d="M1 1h5L3.500 4z" fill="#ddd" /></Glyph>
            </TabTools>
          </Tabs>
          <Panels>
            {["Polygon Modeling", "Modify Selection", "Edit", "Geometry (All)", "Vertices", "Loops", "Subdivision", "Visibility", "Align", "Properties"].map((t) => (
              <PanelButton key={t}>{t}</PanelButton>
            ))}
          </Panels>
        </Ribbon>
      </RibbonRow>

      <Main>
        <Left>
          <DotLine $m="0 6px 0 2px" />
          <SideMenus>{["Select", "Display", "Edit", "Customize"].map((m) => <button key={m}>{m}</button>)}</SideMenus>
          <SearchRow>
            <input aria-label="Search" />
            <ClearButton aria-label="Clear"><Glyph w={12} h={12}><path d="M1 2l9 8M10 2L1 10" stroke="#b0b0b0" strokeWidth="2" /></Glyph></ClearButton>
            <FilterButton aria-label="Filter"><Glyph w={18} h={18}><path d="M2 2h13l-5 6v6l-3-2V8z" fill="#f0f0f0" stroke="#222" /><path d="M8 12l4-4v3h4v3h-4v3z" fill={c.cyan} stroke="#1c4c4e" strokeWidth="0.600" /></Glyph></FilterButton>
            <VLine $h={23} $lit />
            <Chevrons>»</Chevrons>
          </SearchRow>
          <Explorer>
            <Strip>
              {stripIcons.map((s, i) =>
                s ? (
                  <StripButton key={i} aria-label={s[0]} $on={s[1]}><Glyph w={22} h={20}>{s[2]}</Glyph></StripButton>
                ) : <StripRule key={i} />
              )}
            </Strip>
            <TreeBox>
              <Tree>
                <colgroup><col width="50" /><col /><col width="43" /></colgroup>
                <thead>
                  <tr>
                    <th colSpan={2}><span>Name (Sorted Ascending)<Glyph w={8} h={7}><path d="M4 0l4 7H0z" fill="#fff" /></Glyph></span></th>
                    <th>Frozen</th>
                  </tr>
                </thead>
                <tbody>
                  {rows.map((r) => (
                    <tr key={r.name}>
                      <td>
                        <Glyph w={50} h={18}>
                          <path d={`M9.500 ${r.first ? 9 : 0}V${r.last ? 9 : 18}M9.500 9.500H19`} stroke="#858585" strokeDasharray="1 1" />
                          <Eye x={19} y={4} off={r.hidden} />
                          <circle cx="40" cy="8.500" r="5.500" fill="#e2e2e2" />
                        </Glyph>
                      </td>
                      <NameCell $bg={r.bg} $hidden={r.hidden}>{r.name}</NameCell>
                      <FrozenCell $bg={r.bg}><Snowflake size={13} color="#333" strokeWidth={2} /></FrozenCell>
                    </tr>
                  ))}
                </tbody>
              </Tree>
            </TreeBox>
          </Explorer>
          <SearchRow $layer>
            <input aria-label="Layer" defaultValue="Default" />
            <ClearButton aria-label="Choose layer" $w={16}><Glyph w={8} h={5}><path d="M1 1h6L4 4z" fill="#111" /></Glyph></ClearButton>
            <VLine $h={23} $lit />
            <ClearButton aria-label="Layers" $w={28}><Glyph w={16} h={16}><path d="M8 1l7 3-7 3-7-3zM1 7l7 3 7-3v2l-7 3-7-3zM1 11l7 3 7-3v1l-7 4-7-4z" fill="#f0f0f0" /></Glyph></ClearButton>
            <Chevrons>»</Chevrons>
          </SearchRow>
        </Left>

        <Viewport>
          <Scene />
          <ViewLabel>[+] [Orthographic ] [Standard ] [Hidden Line ]</ViewLabel>
        </Viewport>

        <Right>
          <DotLine $m="0 0 0 1px" />
          <CommandTabs>
            {commandIcons.map(([n, d]) => <button key={n} aria-label={n}><Glyph s={22}>{d}</Glyph></button>)}
          </CommandTabs>
          <Body>
            <NameRow><input aria-label="Object name" defaultValue="Cylinder002" /><button aria-label="Object color" /></NameRow>
            <Drop label="Modifier List" text="Modifier List" $pad={1} />
            <Stack>
              <StackRow>
                <Glyph w={41} h={17}><Eye x={5} y={3} /><path d="M26 5h8l-4 6z" fill="#f4f4f4" /></Glyph>
                <b>Edit Poly</b><Dots />
              </StackRow>
              {["Vertex", "Edge", "Border", "Polygon", "Element"].map((n, i) => (
                <StackRow key={n} $on={i === 0}>
                  <Glyph w={50} h={17}><path d={`M30.500 0V${i === 4 ? 9 : 17}M31 8.500h16`} stroke="#1c1c1c" strokeDasharray="1 1" /></Glyph>
                  <b>{n}</b>{i === 0 && <Dots on />}
                </StackRow>
              ))}
              <StackRow $base><b>Cylinder</b></StackRow>
            </Stack>
            <StackTools>
              <button aria-label="Pin Stack"><Glyph s={18}><path d="M3 15l5-5" stroke={L} strokeWidth="1.500" /><path d="M10 3l5 5-2 1-1 3-2 1-5-5 1-2 3-1z" fill={L} /></Glyph></button>
              <VLine />
              <button aria-label="Show End Result" aria-pressed="true"><Glyph s={18}><path d="M6 4h6v13H6z" stroke="#333" strokeWidth="0.800" /><path d="M4 1h10v3H4z" fill={L} stroke="#333" strokeWidth="0.800" /><path d="M7.500 5h3v11h-3z" fill={c.cyan} stroke="#eee" /></Glyph></button>
              <VLine />
              <button aria-label="Make Unique"><Glyph s={18}><circle cx="5" cy="5" r="3.500" fill="#666" stroke="#222" /><circle cx="8" cy="13" r="3" stroke="#222" strokeWidth="1.500" /><circle cx="14" cy="12" r="3" stroke="#222" strokeWidth="1.500" /><path d="M9 4h4v4" stroke="#222" strokeWidth="1.500" /></Glyph></button>
              <button aria-label="Remove Modifier"><Glyph s={18}><path d="M4 4h10M7 4V2h4v2M5 6h8v10H5z" stroke={L} strokeWidth="1.500" /><path d="M7.500 7v8M10.500 7v8" stroke={L} /></Glyph></button>
              <VLine />
              <button aria-label="Configure Sets"><Glyph s={18}><path d="M3 3h11v13H3z" stroke={L} strokeWidth="1.500" /><path d="M5 6h6M5.500 8.500h2v2h-2zM10.500 8.500h2v2h-2zM5.500 12.500h2v2h-2zM10.500 12.500h2v2h-2z" stroke={L} /><path d="M9 10l7-7" stroke={c.orange} strokeWidth="2.500" /></Glyph></button>
            </StackTools>
            <Splitter><DotLine as="i" /></Splitter>
            <Rollouts>
              <RolloutList>
                <Rollout $tail />
                <Rollout>
                  <RolloutHead>
                    <Glyph w={8} h={6}><path d="M0 0h7L3.500 5z" fill="#ccc" /></Glyph>
                    Soft Selection
                    <Glyph w={6} h={6}><path d="M0 .5h6M0 2.500h6M0 4.500h6" stroke="#bbb" strokeDasharray="1 1.500" /></Glyph>
                  </RolloutHead>
                  <Check label="Use Soft Selection" />
                  <Check label="Edge Distance:" sub><Spin label="Edge distance" value="1" dim w={42} h={16} /></Check>
                  <Check label="Affect Backfacing" sub checked />
                  {[["Falloff", "20,0"], ["Pinch", "-0,05"], ["Bubble", "0,85"]].map(([n, v]) => (
                    <ParamRow key={n}><label htmlFor={n}>{n}:</label><Spin id={n} value={v} dim h={16} /></ParamRow>
                  ))}
                  <Falloff>
                    <Glyph w={119} h={79}>
                      <rect x="0.500" y="0.500" width="118" height="78" fill="#fff" stroke="#000" />
                      <path d="M5 20h110M5 61h110M60.500 5v70" stroke="#eee" strokeDasharray="4 3" />
                      <path d="M2 61C14 36 32 19 52 19H68C86 19 99 36 117 59" stroke="#000" />
                    </Glyph>
                  </Falloff>
                  <Axis><span>20.0</span><span>0.0</span><span>20.0</span></Axis>
                </Rollout>
              </RolloutList>
              <Scroll />
            </Rollouts>
          </Body>
        </Right>
      </Main>

      <Status>
        <Listener>
          <input aria-label="Macro recorder" />
          <input aria-label="Listener" defaultValue="MAXScript Min" />
        </Listener>
        <VLine $h={50} />
        <StatusCenter>
          <Ghost $h={4} $l={129} $w={680} />
          <StatusRow $h={21}>
            <p>1 Object Selected</p>
            <StatusIcon aria-label="Isolate"><Glyph s={16}><path d="M2 5V2h3M11 2h3v3M2 11v3h3M11 14h3v-3" stroke={L} strokeWidth="1.500" /><path d="M5 5h6v6H5z" fill={c.cyan} /></Glyph></StatusIcon>
            <StatusIcon aria-label="Lock"><Glyph s={16}><path d="M3 7h10v8H3z" fill={L} /><path d="M5 8V4a3 3 0 0 1 6 0v4" stroke={L} strokeWidth="2" /><path d="M8 9v4" stroke="#333" strokeWidth="2" /></Glyph></StatusIcon>
            <StatusIcon aria-label="Transform Type"><Glyph s={16}><path d="M1.500 1.500h13v13h-13z" stroke={L} strokeWidth="1.500" /><circle cx="8" cy="8" r="3" stroke={L} strokeWidth="2" /><path d="M8 1v3M8 12v3M1 8h3M12 8h3" stroke={L} strokeWidth="2" /></Glyph></StatusIcon>
            <label htmlFor="tx">X:</label><Spin id="tx" value="0,0" />
            <label htmlFor="ty">Y:</label><Spin id="ty" value="-20,398" />
            <label htmlFor="tz">Z:</label><Spin id="tz" value="95,112" focus />
            <Readout>Grid = 10,0</Readout>
          </StatusRow>
          <Ghost $h={4} $l={144} $w={598} />
          <StatusRow $h={20}>
            <p>Click or click-and-drag to select objects</p>
            <TagButton aria-label="Time tag"><Glyph s={14}><path d="M7 1l5 3v6l-5 3-5-3V4zM2 4l5 3 5-3M7 7v6" stroke="#111" strokeWidth="2.200" /><path d="M7 1l5 3v6l-5 3-5-3V4zM2 4l5 3 5-3M7 7v6" stroke="#eee" strokeWidth="0.900" /></Glyph></TagButton>
            <Readout>Add Time Tag</Readout>
          </StatusRow>
          <Ghost $h={2} $l={157} $w={472} />
        </StatusCenter>
        <Play>
          <div>
            <Glyph w={120} h={18}>
              <path d="M8 3v12M16 3v12M34 9l8-6v12zM44 3v12M48 3v12M58 2l12 7-12 7zM82 3v12M86 3v12M96 9l-8-6v12zM106 3v12l6-6zM114 3v12" fill={L} stroke={L} strokeWidth="1.500" />
              <path d="M77 14v4h-4z" fill="#fff" />
            </Glyph>
          </div>
          <div>
            <Glyph w={26} h={14}><path d="M13 2v10L7 7zM15 2v10l6-5z" fill={L} /></Glyph>
            <Spin label="Frame" value="0" />
            <Glyph s={20}><circle cx="9" cy="7" r="6" fill={L} /><path d="M9 3v4h3" stroke="#333" strokeWidth="1.500" /><Gear cx={14} cy={13} r={2} /></Glyph>
          </div>
        </Play>
        <AddKey aria-label="Set keys"><Glyph s={32}><path d="M13 4v22M2 15h22" stroke={L} strokeWidth="5" /><path d="M17 26l10-9M24 20l3 3M21 22l3 3" stroke="#2f6f72" strokeWidth="4" /><path d="M17 26l10-9M24 20l3 3M21 22l3 3" stroke={c.cyan} strokeWidth="2" /><circle cx="17" cy="26" r="2.500" fill="#666" stroke={c.cyan} strokeWidth="2" /></Glyph></AddKey>
        <KeyColumn $w={47}><KeyButton>Auto Key</KeyButton><KeyButton>Set Key</KeyButton></KeyColumn>
        <KeyColumn $w={114}>
          <Drop label="Key mode" text="Selected" $h={20} />
          <div>
            <Glyph s={22}><path d="M5 18c4-3 4-7 1-11M17 18c-4-3-4-7-1-11" stroke={c.cyan} strokeWidth="2.500" /><path d="M2 5l6 1M14 6l6-1" stroke={L} strokeWidth="2" /><path d="M9 3h4v4H9z" stroke={L} /><path d="M22 18v4h-4z" fill="#fff" /></Glyph>
            <KeyButton $w="89px">Key Filters...</KeyButton>
          </div>
        </KeyColumn>
        <Nav>{navIcons.map(([n, d]) => <button key={n} aria-label={n}><Glyph s={21}>{d}</Glyph></button>)}</Nav>
      </Status>

      <Taskbar>
        <TaskButton aria-label="Start"><Glyph s={16}><path d="M0 2l7-1v7H0zM8 1l8-1v8H8zM0 9h7v6l-7-1zM8 9h8v7l-8-1z" fill="#fff" /></Glyph></TaskButton>
        <TaskSearch>
          <Glyph s={23}><circle cx="11.500" cy="11.500" r="9" stroke="#f2f2f2" strokeWidth="3.500" /></Glyph>
          <input placeholder="Scrivi qui per eseguire la ricerca" />
          <Mic size={17} color="#d0d0d0" strokeWidth={2} />
        </TaskSearch>
        <TaskButton aria-label="Task View"><Glyph w={22} h={16}><path d="M5.500 1.500h11v13h-11zM3 3.500H1.500v9H3M19 3.500h1.500v9H19" stroke="#fff" strokeWidth="1.300" /></Glyph></TaskButton>
        <TaskButton aria-label="Mail"><Glyph w={26} h={20}><path d="M1 7l12-6 12 6v12H1z" fill="#fff" /><path d="M3 7h20l-9 5 5 5z" fill="#000" /></Glyph></TaskButton>
        <TaskButton aria-label="Files" $run><Glyph w={24} h={22}><path d="M1 2h9l2 2h10v15H1z" fill="#ffe79a" /><path d="M1 6h21v13H1z" fill="#f7d774" opacity="0.600" /><path d="M5 20v-8h14v8h-4v-4H9v4z" fill="#34b3ee" /></Glyph></TaskButton>
        <TaskButton aria-label="Chrome" $run>
          <Glyph s={22}>
            <circle cx="11" cy="11" r="11" fill="#f9cd2c" />
            <path d="M11 11L1.500 5.500A11 11 0 0 1 20.500 6H11z" fill="#db4437" />
            <path d="M11 11L1.500 5.500A11 11 0 0 0 10 22l5-8z" fill="#1da05c" />
            <circle cx="11" cy="11" r="5.500" fill="#fff" /><circle cx="11" cy="11" r="4.200" fill="#4285f4" />
          </Glyph>
        </TaskButton>
        <TaskButton aria-label="GitHub" $run>
          <Glyph s={24}><circle cx="12" cy="12" r="11" fill="#6a2c9c" stroke="#fff" strokeWidth="1.500" /><path d="M6 7l3 2h6l3-2 1 6c0 4-3 5-7 5s-7-1-7-5z" fill="#fff" /></Glyph>
        </TaskButton>
        <TaskButton aria-label="3ds Max" $active>
          <Glyph s={24}><path d="M0 0h24v24H0z" fill="#e6f3f3" /><text x="6" y="17" fontSize="19" fontWeight="900" fill="#138a92" fontFamily="Roboto">3</text><text x="12" y="23" fontSize="5" fontWeight="700" fill="#138a92" fontFamily="Roboto">MAX</text></Glyph>
        </TaskButton>
        <Tray>
          <button aria-label="Help"><Glyph s={23}><circle cx="11.500" cy="11.500" r="10" fill="#12a0e8" stroke="#fff" strokeWidth="2" /><text x="7" y="17" fontSize="16" fontWeight="700" fill="#fff" fontFamily="Roboto">?</text></Glyph></button>
          <button aria-label="Show hidden icons"><Glyph w={14} h={8}><path d="M1 7l6-6 6 6" stroke="#fff" strokeWidth="1.500" /></Glyph></button>
          <button aria-label="Battery"><Glyph w={16} h={10}><rect x="1" y="1" width="12" height="8" stroke="#fff" strokeWidth="1.500" /><path d="M3 3h5v4H3zM14 3h2v4h-2z" fill="#fff" /></Glyph></button>
          <button aria-label="Network"><Glyph s={14}><path d="M1 13C1 6 6 2 13 2M4 13c0-5 4-8 9-8M7 13c0-3 3-5 6-5" stroke="#c8c8c8" /><circle cx="11" cy="12" r="2" fill="#fff" /></Glyph></button>
          <button aria-label="Volume"><Glyph w={16} h={14}><path d="M1 5h2l4-4v12L3 9H1zM10 5l4 4M14 5l-4 4" stroke="#fff" strokeWidth="1.200" /></Glyph></button>
          <Clock>12:12<br />02/11/2017</Clock>
          <Notice aria-label="Notifications"><Glyph w={18} h={17}><path d="M1 1h15v12h-5l-2.500 3L6 13H1z" stroke="#fff" strokeWidth="1.400" /></Glyph></Notice>
        </Tray>
      </Taskbar>

      <Context role="menu">
        {contextItems.map((it, i) =>
          it ? (
            <ContextItem key={i} role="menuitem" $off={it[1] === "off"} $on={it[1] === "on"}>
              {it[0]}
              {it[1] === "sub" && <Glyph w={6} h={9}><path d="M1 1l4 3.500L1 8" stroke="#222" /></Glyph>}
            </ContextItem>
          ) : <hr key={i} />
        )}
      </Context>
    </Page>
  );
}
